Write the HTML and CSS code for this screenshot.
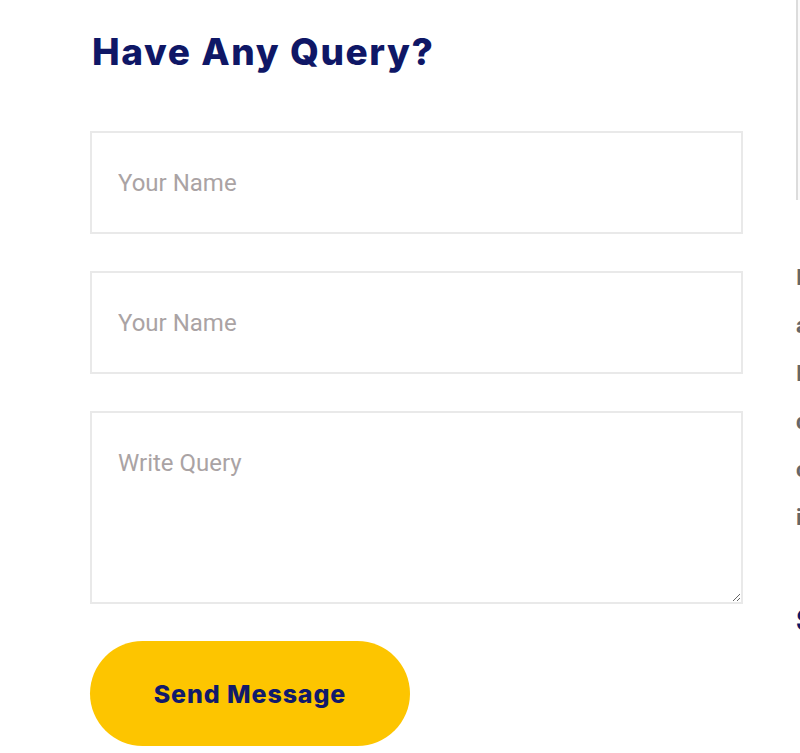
FILE: index.html
```html
<!DOCTYPE html>
<html lang="en">
<head>
<meta charset="utf-8">
<title>Have Any Query?</title>
<link rel="stylesheet" href="styles.css">
</head>
<body>
<div class="page">
  <section class="form-col">
    <h2 class="title">Have Any Query?</h2>
    <form class="query-form">
      <input class="field" type="text" placeholder="Your Name">
      <input class="field" type="text" placeholder="Your Name">
      <textarea class="field area" placeholder="Write Query"></textarea>
      <button class="send" type="button">Send Message</button>
    </form>
  </section>
  <aside class="side">
    <div class="side-img"></div>
    <p class="side-text">
      <span class="line">In our office</span>
      <span class="line">and support</span>
      <span class="line">If you have</span>
      <span class="line">questions</span>
      <span class="line">contact us</span>
      <span class="line">in touch</span>
    </p>
    <h3 class="side-title">Subscribe</h3>
  </aside>
</div>
</body>
</html>
```

FILE: styles.css
```css
* { box-sizing: border-box; }
html, body { margin: 0; padding: 0; background: #fff; }
.page {
  display: flex;
  width: 800px;
  height: 753px;
  overflow: hidden;
}
.form-col {
  flex: 0 0 653px;
  margin-left: 90px;
}
.title {
  margin: 30px 0 0 2px;
  font-family: Inter, "Noto Sans", sans-serif;
  font-weight: 800;
  font-size: 37px;
  line-height: 44px;
  color: #0f1766;
  letter-spacing: 1.6px;
}
.query-form {
  display: flex;
  flex-direction: column;
  gap: 37px;
  margin-top: 57px;
}
.field {
  display: block;
  width: 653px;
  height: 103px;
  border: 2px solid #e9e9e9;
  background: #fff;
  padding: 0 26px;
  font-family: Roboto, sans-serif;
  font-size: 24px;
  color: #333;
  outline: none;
}
.field::placeholder { color: #aaa3a4; }
.area {
  height: 193px;
  padding-top: 36px;
  resize: vertical;
}
.send {
  width: 320px;
  height: 105px;
  border: none;
  border-radius: 53px;
  background: #fdc500;
  color: #111a6b;
  font-family: Inter, "Noto Sans", sans-serif;
  font-weight: 800;
  font-size: 25px;
  letter-spacing: 0.9px;
  cursor: pointer;
}
.side {
  flex: 0 0 300px;
  margin-left: 53px;
}
.side-img {
  height: 200px;
  border-left: 2px solid #dcdcdc;
  background: #fafafa;
}
.side-text {
  margin: 54px 0 0;
  font-family: Roboto, sans-serif;
  font-weight: 700;
  font-size: 22px;
  line-height: 48px;
  color: #666;
}
.line { display: block; white-space: nowrap; }
.side-title {
  margin: 60px 0 0;
  font-family: Inter, sans-serif;
  font-weight: 800;
  font-size: 30px;
  color: #0f1766;
}
```
